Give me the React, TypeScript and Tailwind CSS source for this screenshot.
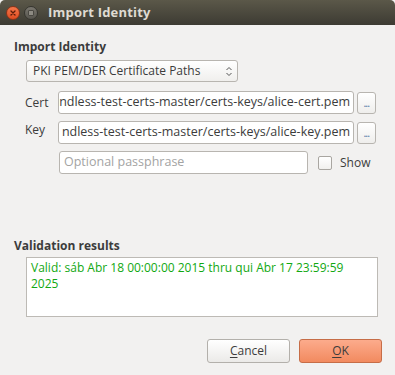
export default function App() {
  return (
    <div
      className="w-[395px] h-[375px] bg-[#f2f1f0] flex flex-col text-[#3c3c3c] overflow-hidden"
      style={{ fontFamily: '"Open Sans", "DejaVu Sans", sans-serif' }}
    >
      {/* Title bar */}
      <div className="h-[25px] shrink-0 rounded-t-[5px] bg-gradient-to-b from-[#5b5849] to-[#3d3b33] flex items-center px-[6px] gap-[4px]">
        <div className="w-[14px] h-[14px] rounded-full bg-gradient-to-b from-[#f4764a] to-[#df4c1f] border border-[#8c3419] flex items-center justify-center">
          <svg width="6" height="6" viewBox="0 0 6 6">
            <path d="M1 1 L5 5 M5 1 L1 5" stroke="#5b1c0a" strokeWidth="1.3" strokeLinecap="round" />
          </svg>
        </div>
        <div className="w-[14px] h-[14px] rounded-full bg-gradient-to-b from-[#7a776f] to-[#57554e] border border-[#36352f] flex items-center justify-center">
          <div className="w-[6px] h-[6px] rounded-[1px] bg-[#8e8b83] border border-[#4a4842]" />
        </div>
        <span className="ml-[6px] text-[13px] font-bold text-[#dfdbd2] tracking-[0.2px]">Import Identity</span>
      </div>

      {/* Body */}
      <div className="flex flex-col pl-[14px] pr-[13px] pt-[14px]">
        <div className="text-[12px] font-bold leading-[16px]">Import Identity</div>

        <div className="pl-[12px] pt-[5px] flex flex-col">
          <div className="w-[212px] h-[22px] rounded-[3px] border border-[#b8b5b0] bg-gradient-to-b from-white to-[#f0efed] flex items-center justify-between pl-[6px] pr-[5px] text-[12px]">
            <span>PKI PEM/DER Certificate Paths</span>
            <svg width="6" height="11" viewBox="0 0 6 11">
              <path d="M0.5 4 L3 1.5 L5.5 4" fill="none" stroke="#555" strokeWidth="1" />
              <path d="M0.5 7 L3 9.5 L5.5 7" fill="none" stroke="#555" strokeWidth="1" />
            </svg>
          </div>

          <div className="flex items-center mt-[9px] h-[23px]">
            <span className="w-[33px] text-[12px] -ml-[1px]">Cert</span>
            <div className="w-[296px] h-[23px] rounded-[3px] border border-[#b8b5b0] bg-white overflow-hidden flex justify-end items-center pr-[3px] text-[12.5px] whitespace-nowrap">
              <span>ndless-test-certs-master/certs-keys/alice-cert.pem</span>
            </div>
            <button className="ml-[3px] w-[19px] h-[22px] rounded-[3px] border border-[#b8b5b0] bg-gradient-to-b from-white to-[#efeeec] flex items-end justify-center pb-[6px]">
              <span className="text-[8px] leading-[6px] text-[#5b7fa8] font-bold tracking-[-0.5px]">...</span>
            </button>
          </div>

          <div className="flex items-center mt-[7px] h-[23px]">
            <span className="w-[33px] text-[12px] -ml-[1px] -mt-[6px]">Key</span>
            <div className="w-[296px] h-[23px] rounded-[3px] border border-[#b8b5b0] bg-white overflow-hidden flex justify-end items-center pr-[3px] text-[12.5px] whitespace-nowrap">
              <span>ndless-test-certs-master/certs-keys/alice-key.pem</span>
            </div>
            <button className="ml-[3px] w-[19px] h-[22px] rounded-[3px] border border-[#b8b5b0] bg-gradient-to-b from-white to-[#efeeec] flex items-end justify-center pb-[6px]">
              <span className="text-[8px] leading-[6px] text-[#5b7fa8] font-bold tracking-[-0.5px]">...</span>
            </button>
          </div>

          <div className="flex items-center mt-[7px] h-[23px] pl-[33px]">
            <div className="w-[249px] h-[23px] rounded-[3px] border border-[#b8b5b0] bg-white flex items-center pl-[4px] text-[12.5px] text-[#a3a3a3]">
              Optional passphrase
            </div>
            <div className="ml-[10px] w-[14px] h-[14px] rounded-[2px] border border-[#a9a6a1] bg-gradient-to-b from-white to-[#f1f0ee]" />
            <span className="ml-[8px] text-[12px]">Show</span>
          </div>
        </div>

        <div className="mt-[64px] text-[12px] font-bold leading-[16px]">Validation results</div>
        <div className="ml-[12px] mt-[3px] w-[352px] h-[60px] border border-[#bdbab5] bg-white px-[4px] pt-[2px] text-[12px] leading-[16px] text-[#12a812]">
          Valid: sáb Abr 18 00:00:00 2015 thru qui Abr 17 23:59:59 2025
        </div>

        <div className="flex justify-end gap-[9px] mt-[22px]">
          <button className="w-[83px] h-[24px] rounded-[3px] border border-[#b3b0ab] bg-gradient-to-b from-white to-[#ebeae8] text-[12px] text-[#3c3c3c]">
            <span className="underline underline-offset-2">C</span>ancel
          </button>
          <button className="w-[83px] h-[24px] rounded-[3px] border border-[#c66d47] bg-gradient-to-b from-[#fcab8c] to-[#f28a5f] text-[12px] text-[#3c3c3c]">
            <span className="underline underline-offset-2">O</span>K
          </button>
        </div>
      </div>
    </div>
  );
}
